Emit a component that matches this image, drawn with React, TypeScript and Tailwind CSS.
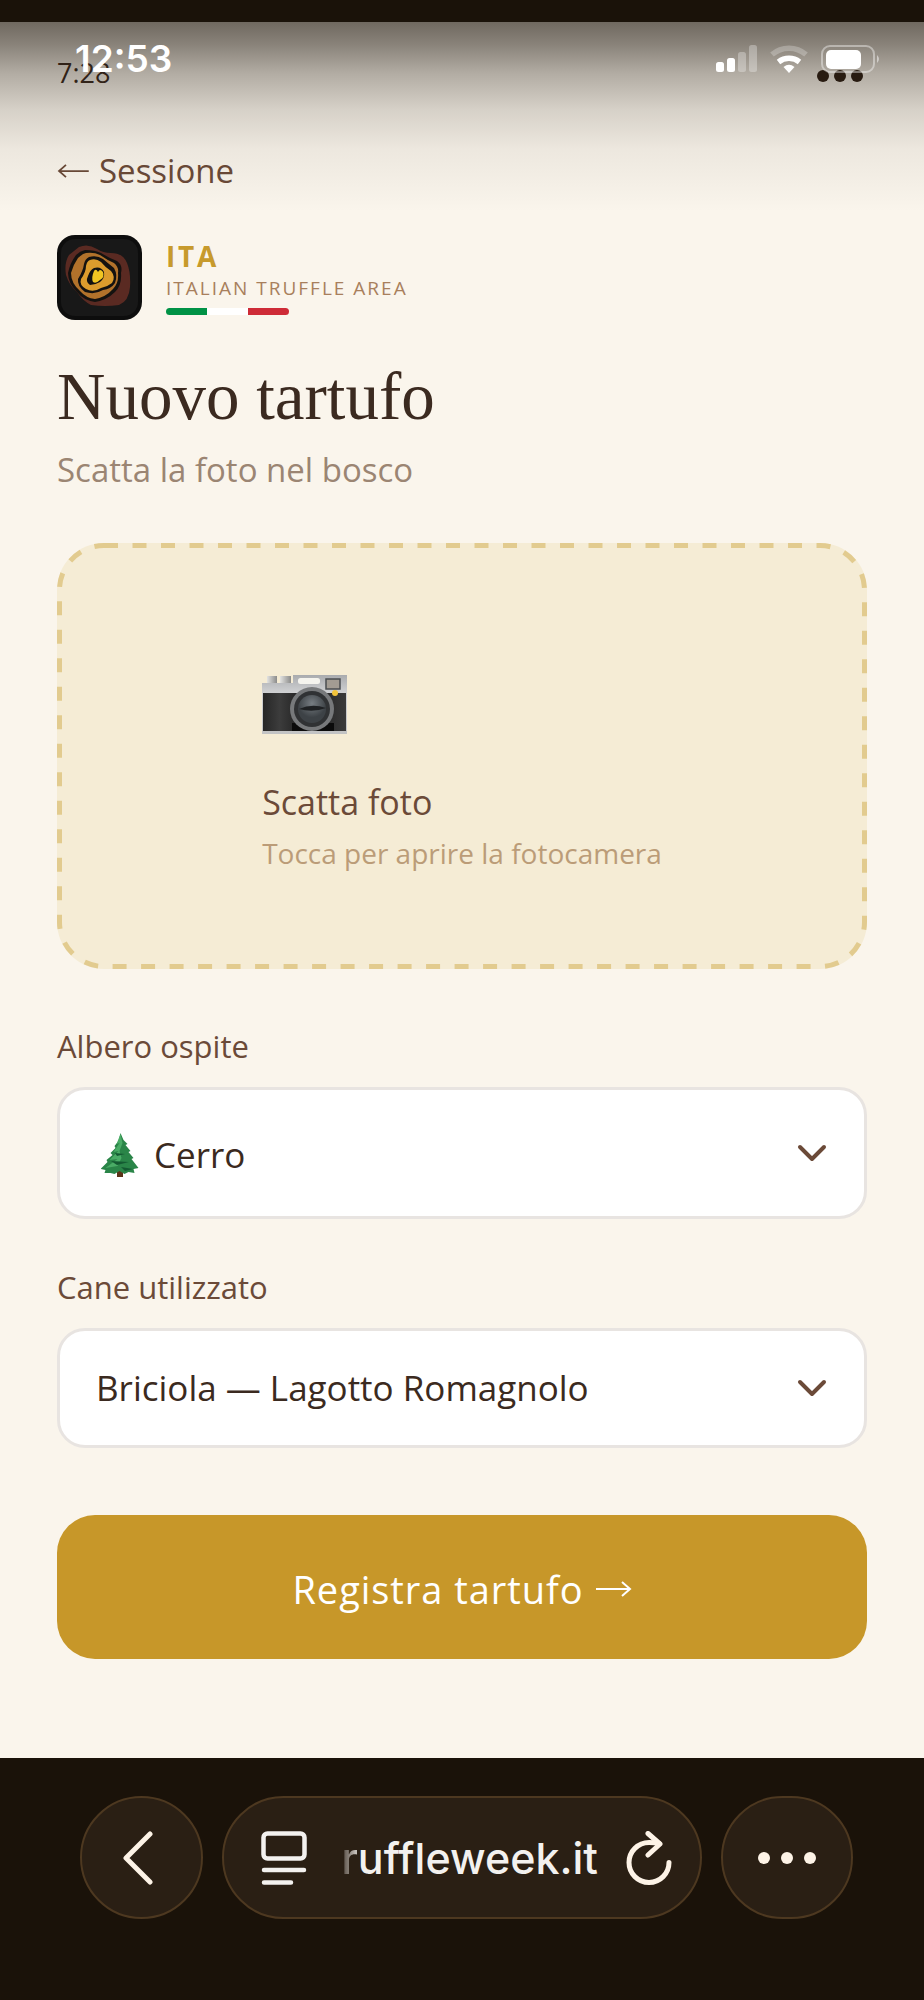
import type { ReactNode } from 'react';

function SignalIcon() {
  return (
    <svg className="h-7 w-[41px]" viewBox="0 0 41 28" fill="#fff" aria-hidden="true">
      <rect x="0" y="17" width="8" height="10" rx="2.5" />
      <rect x="11" y="13" width="8" height="14" rx="2.5" />
      <rect x="22" y="7" width="8" height="20" rx="2.5" opacity=".3" />
      <rect x="33" y="0" width="8" height="27" rx="2.5" opacity=".3" />
    </svg>
  );
}

function WifiIcon() {
  return (
    <svg className="h-7 w-[38px]" viewBox="0 0 38 28" fill="none" stroke="#fff" aria-hidden="true">
      <path d="M2 9.5a26 26 0 0 1 34 0" strokeWidth="5.5" opacity=".25" />
      <path d="M8.5 17a17 17 0 0 1 21 0" strokeWidth="5.5" />
      <path d="M13.5 22q5.5-4.5 11 0L19 28z" fill="#fff" stroke="none" />
    </svg>
  );
}

function BatteryIcon() {
  return (
    <svg className="h-7 w-[60px]" viewBox="0 0 60 28" aria-hidden="true">
      <rect x="1" y="1" width="52" height="26" rx="8" fill="none" stroke="#fff" strokeWidth="2" opacity=".4" />
      <rect x="5" y="5" width="35" height="19" rx="5" fill="#fff" />
      <path d="M56 10q4 4 0 8z" fill="#fff" opacity=".5" />
    </svg>
  );
}

function TruffleLogo() {
  return (
    <svg className="h-[85px] w-[85px] shrink-0" viewBox="0 0 85 85" role="img" aria-label="ITA">
      <rect width="85" height="85" rx="18" fill="#0d0d0d" />
      <rect x="4" y="4" width="77" height="77" rx="14" fill="#181818" />
      <path
        d="M22 12Q31 8 40 14Q46 18 54 18Q66 18 70 28Q74 38 73 52Q72 66 62 70Q48 72 34 70Q26 66 20 57Q12 50 9 40Q7 28 12 20Q17 16 22 12z"
        fill="#5a2a22"
      />
      <path
        d="M28 15Q38 15 44 18Q52 23 60 26Q66 30 64 38Q65 50 58 57Q50 65 38 67Q26 65 20 57Q11 48 11 38Q13 28 19 20Q23 16 28 15z"
        fill="#141210"
      />
      <path
        d="M29 18Q37 17 43 20Q50 25 57 28Q62 32 61 38Q62 48 56 54Q49 62 38 64Q29 63 23 56Q14 48 14 38Q16 30 21 23Q25 19 29 18z"
        fill="#b2722b"
      />
      <path
        d="M32 22Q40 20 46 24Q52 29 57 33Q61 40 58 48Q54 54 46 55Q38 60 28 57Q20 51 21 44Q26 36 27 29Q28 24 32 22z"
        fill="#141210"
      />
      <path
        d="M33 25Q39 23 44 27Q48 32 54 36Q59 42 55 48Q50 52 44 53Q36 58 29 54Q22 50 24 44Q29 37 29 31Q30 26 33 25z"
        fill="#dc9c2d"
      />
      <path d="M37 33Q44 31 47 37Q48 43 43 47Q38 50 33 50Q28 47 31 41Q33 35 37 33z" fill="#111" />
      <path d="M41 37Q43 33 46 37Q48 42 43 45Q39 49 36 47Q34 43 37 36Q39 33 41 37z" fill="#f0c522" />
    </svg>
  );
}

function CameraIcon() {
  return (
    <svg className="h-[59px] w-[85px]" viewBox="0 0 85 59" aria-hidden="true">
      <defs>
        <linearGradient id="metal" x2="0" y2="1">
          <stop stopColor="#a9abae" />
          <stop offset=".3" stopColor="#d0d1d3" />
          <stop offset="1" stopColor="#c2c3c4" />
        </linearGradient>
        <linearGradient id="knob">
          <stop stopColor="#e3e3e1" />
          <stop offset="1" stopColor="#8b8b8a" />
        </linearGradient>
        <linearGradient id="leather">
          <stop stopColor="#262626" />
          <stop offset=".2" stopColor="#3c3c3c" />
          <stop offset=".5" stopColor="#1c1c1c" />
          <stop offset="1" stopColor="#3a3a3a" />
        </linearGradient>
        <radialGradient id="glass" cx=".5" cy=".3">
          <stop stopColor="#777d82" />
          <stop offset="1" stopColor="#3d4246" />
        </radialGradient>
      </defs>
      <rect x="5" y="1" width="10" height="8" fill="url(#knob)" />
      <rect x="18" y="1" width="11" height="8" fill="url(#knob)" />
      <path d="M0 8h31V0h54v59H0z" fill="url(#metal)" />
      <rect x="1" y="18" width="83" height="38" fill="url(#leather)" />
      <rect x="30" y="48" width="42" height="8" fill="#0b0b0b" />
      <rect x="36" y="3" width="22" height="6" rx="2.5" fill="#f5f4ee" />
      <rect x="64" y="4" width="14" height="10" fill="#a39c93" stroke="#4b4e50" strokeWidth="1.5" />
      <circle cx="50" cy="34" r="22" fill="#77797b" />
      <circle cx="50" cy="34" r="18" fill="#303234" />
      <circle cx="50" cy="34" r="14" fill="url(#glass)" />
      <path d="M37 34q13-6 27-1-13 5-27 1z" fill="#1f2123" />
      <circle cx="73" cy="18" r="3" fill="#f2c43a" />
    </svg>
  );
}

function TreeIcon() {
  return (
    <svg className="h-[44px] w-[38px]" viewBox="0 0 38 44" aria-hidden="true">
      <path d="M16 36h6v8h-6z" fill="#5b3218" />
      <path
        d="M19.5 0l3 7 4 4-2 1 5 6-2 1 5 6-2 1 7 9-5 1 1 4-6-1-4 2-5-3-5 3-4-1-6 0 1-3-5-1 7-7-1-2 6-5-2-2 5-5-1-2 4-5z"
        fill="#2a8548"
      />
      <path d="M19.5 1l-4 10 3-1-6 9 5-1-9 9 8-1-12 9 12-2 4-8-2-7 3-8z" fill="#4aac66" />
      <path d="M14 20l10 1-8 2zM10 28l18 1-12 3zM20 34l12 2-8 2z" fill="#145a32" />
    </svg>
  );
}

function ArrowIcon({ className }: { className: string }) {
  return (
    <svg className={className} viewBox="0 0 36 16" fill="none" stroke="currentColor" strokeWidth="2" aria-hidden="true">
      <path d="M0 8h34M26 1l8 7-8 7" />
    </svg>
  );
}

type SelectFieldProps = {
  id: string;
  label: string;
  options: string[];
  icon?: ReactNode;
};

function SelectField({ id, label, options, icon }: SelectFieldProps) {
  return (
    <div className="flex flex-col gap-5">
      <label htmlFor={id} className="text-[31px] leading-[42px] text-[#6b4a38]">
        {label}
      </label>
      <div className="relative">
        <select
          id={id}
          className={
            icon
              ? 'block h-[132px] w-full appearance-none rounded-[28px] border-3 border-[#e8e4e1] bg-white pt-1 pr-24 pl-[94px] text-[35px] text-[#3b2a20]'
              : 'block h-[120px] w-full appearance-none rounded-[28px] border-3 border-[#e8e4e1] bg-white pr-24 pl-9 text-[35px] text-[#3b2a20]'
          }
        >
          {options.map((option) => (
            <option key={option}>{option}</option>
          ))}
        </select>
        {icon && <span className="pointer-events-none absolute inset-y-0 left-11 flex items-center pt-1">{icon}</span>}
        <span className="pointer-events-none absolute inset-y-0 right-10 flex items-center text-[#6b4a38]">
          <svg
            className="h-[18px] w-[30px]"
            viewBox="0 0 30 18"
            fill="none"
            stroke="currentColor"
            strokeWidth="4"
            strokeLinecap="round"
            strokeLinejoin="round"
            aria-hidden="true"
          >
            <path d="M3 3l12 12L27 3" />
          </svg>
        </span>
      </div>
    </div>
  );
}

function StatusBar() {
  return (
    <div className="pointer-events-none absolute inset-x-0 top-0 h-[190px] bg-[linear-gradient(to_bottom,rgba(26,18,9,0.62),rgba(26,18,9,0.5)_12%,rgba(26,18,9,0.32)_27%,rgba(26,18,9,0.16)_46%,rgba(26,18,9,0.06)_67%,rgba(26,18,9,0))] text-white">
      <div className="flex items-center justify-between pt-[15px] pr-[43px] pl-[75px]">
        <span className="font-[Inter,sans-serif] text-[37px] leading-[44px] font-semibold">12:53</span>
        <div className="flex items-center gap-[13px]">
          <SignalIcon />
          <WifiIcon />
          <BatteryIcon />
        </div>
      </div>
    </div>
  );
}

function BrowserBar() {
  return (
    <nav className="flex grow items-start gap-[19px] bg-[#1a1209] pt-[38px] pr-[71px] pb-20 pl-20 text-[#fdf3e7]">
      <button
        aria-label="Indietro"
        className="flex h-[123px] w-[123px] shrink-0 items-center justify-center rounded-full border-2 border-[#4d3820] bg-[#2a1f14] pr-2"
      >
        <svg className="h-[54px] w-[30px]" viewBox="0 0 30 54" fill="none" stroke="currentColor" strokeWidth="5" strokeLinecap="round" strokeLinejoin="round">
          <path d="M27 3L3 27l24 24" />
        </svg>
      </button>
      <div className="flex h-[123px] min-w-0 grow items-center rounded-full border-2 border-[#4d3820] bg-[#2a1f14] pr-7 pl-[37px]">
        <button aria-label="Impostazioni pagina">
          <svg className="h-[54px] w-[46px]" viewBox="0 0 46 54" fill="none" stroke="#f3f1ef" strokeWidth="4.5" strokeLinecap="round">
            <rect x="2.5" y="2.5" width="41" height="25" rx="4" />
            <path d="M3 39h40M3 51.500h27" />
          </svg>
        </button>
        <button className="mr-7 ml-auto font-[Inter,sans-serif] text-[43px] leading-[54px] font-medium text-[#f3f1ef]">
          <span className="bg-linear-to-r from-[#4b4138] to-[#d8d4d0] bg-clip-text text-transparent">r</span>uffleweek.it
        </button>
        <button aria-label="Ricarica">
          <svg
            className="h-[54px] w-[46px]"
            viewBox="0 0 46 54"
            fill="none"
            stroke="currentColor"
            strokeWidth="5"
            strokeLinecap="round"
            strokeLinejoin="round"
          >
            <path d="M33 12.500Q29 11.500 23 11.500A20 20 0 1 0 43 31.500" />
            <path d="M22 2.500L34 13 22 24" />
          </svg>
        </button>
      </div>
      <button
        aria-label="Altro"
        className="flex h-[123px] w-[132px] shrink-0 items-center justify-center gap-[11px] rounded-full border-2 border-[#4d3820] bg-[#2a1f14]"
      >
        <span className="h-3 w-3 rounded-full bg-current" />
        <span className="h-3 w-3 rounded-full bg-current" />
        <span className="h-3 w-3 rounded-full bg-current" />
      </button>
    </nav>
  );
}

export default function App() {
  return (
    <div className="flex min-h-screen flex-col bg-[#faf5ec] font-['Open_Sans',sans-serif]">
      <div className="h-[22px] bg-[#1a1209]" />

      <main className="relative px-[57px] pt-[33px] pb-[99px]">
        <div className="flex items-center justify-between text-[#3b2a20]">
          <span className="text-[27px] leading-9">7:28</span>
          <button aria-label="Menu" className="flex gap-[5px] pt-1.5 pr-1">
            <span className="h-3 w-3 rounded-full bg-[#2e1f14]" />
            <span className="h-3 w-3 rounded-full bg-[#2e1f14]" />
            <span className="h-3 w-3 rounded-full bg-[#2e1f14]" />
          </button>
        </div>

        <a href="#sessione" className="mt-[58px] flex w-fit items-center gap-2.5 text-[33px] leading-[44px] text-[#6b4a38]">
          <ArrowIcon className="h-[14px] w-8 rotate-180" />
          Sessione
        </a>

        <div className="mt-[42px] flex items-center gap-6">
          <TruffleLogo />
          <div>
            <p className="text-[28px] leading-8 font-bold tracking-widest text-[#c79a2c]">ITA</p>
            <p className="mt-1 text-[19px] leading-6 tracking-[2px] text-[#a87f5c]">ITALIAN TRUFFLE AREA</p>
            <div className="mt-2 flex h-[7px] w-[123px] overflow-hidden rounded-full">
              <span className="flex-1 bg-[#009246]" />
              <span className="flex-1 bg-white" />
              <span className="flex-1 bg-[#ce2b37]" />
            </div>
          </div>
        </div>

        <h1 className="mt-9 font-['Liberation_Serif',serif] text-[67px] leading-20 text-[#3b2a20]">Nuovo tartufo</h1>
        <p className="mt-3 text-[33px] leading-[44px] text-[#9b8573]">Scatta la foto nel bosco</p>

        <button className="relative mt-[51px] flex w-full justify-center rounded-[47px] bg-[#f5ecd5] pt-[132px] pb-24 text-left">
          <svg className="absolute inset-0 h-full w-full" fill="none" aria-hidden="true">
            <rect
              x="2.5"
              y="2.5"
              rx="44.5"
              className="h-[calc(100%-5px)] w-[calc(100%-5px)]"
              stroke="#e2cb8f"
              strokeWidth="5"
              strokeDasharray="14 14.5"
            />
          </svg>
          <span className="flex flex-col items-start">
            <CameraIcon />
            <span className="mt-[46px] text-[34px] leading-[44px] text-[#6b4a38]">Scatta foto</span>
            <span className="mt-[9px] text-[28px] leading-10 text-[#bb9c78]">Tocca per aprire la fotocamera</span>
          </span>
        </button>

        <form className="mt-14 flex flex-col gap-[47px]">
          <SelectField id="albero" label="Albero ospite" options={['Cerro']} icon={<TreeIcon />} />
          <SelectField id="cane" label="Cane utilizzato" options={['Briciola — Lagotto Romagnolo']} />
          <button
            type="button"
            className="mt-5 flex h-36 w-full items-center justify-center gap-3 rounded-[38px] bg-[#c79729] pt-1 text-[38px] font-medium tracking-wide text-white"
          >
            Registra tartufo
            <ArrowIcon className="h-4 w-9" />
          </button>
        </form>

        <StatusBar />
      </main>

      <BrowserBar />
    </div>
  );
}
